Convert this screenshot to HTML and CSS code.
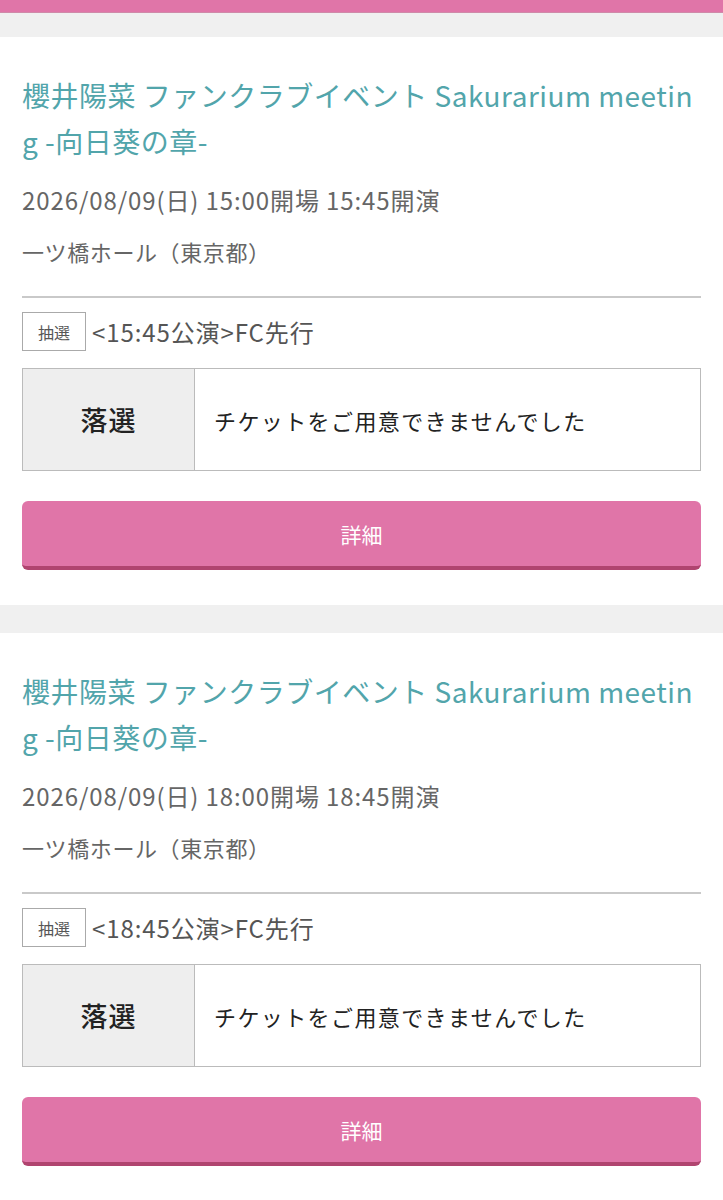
FILE: index.html
```html
<!DOCTYPE html>
<html lang="ja">
<head>
    <meta charset="UTF-8">
    <meta name="viewport" content="width=device-width, initial-scale=1.0">
    <title>申込履歴</title>
    <link rel="stylesheet" href="styles.css">
</head>
<body>
    <div class="topbar"></div>

    <div class="entry-list">
        <div class="entry">
            <h2 class="entry-title">櫻井陽菜 ファンクラブイベント Sakurarium meeting -向日葵の章-</h2>
            <p class="entry-date">2026/08/09(日) 15:00開場 15:45開演</p>
            <p class="entry-venue">一ツ橋ホール（東京都）</p>
            <div class="entry-sale">
                <span class="sale-tag">抽選</span>
                <span class="sale-name">&lt;15:45公演&gt;FC先行</span>
            </div>
            <table class="result">
                <tr>
                    <th>落選</th>
                    <td>チケットをご用意できませんでした</td>
                </tr>
            </table>
            <a class="detail-btn" href="#">詳細</a>
        </div>

        <div class="entry">
            <h2 class="entry-title">櫻井陽菜 ファンクラブイベント Sakurarium meeting -向日葵の章-</h2>
            <p class="entry-date">2026/08/09(日) 18:00開場 18:45開演</p>
            <p class="entry-venue">一ツ橋ホール（東京都）</p>
            <div class="entry-sale">
                <span class="sale-tag">抽選</span>
                <span class="sale-name">&lt;18:45公演&gt;FC先行</span>
            </div>
            <table class="result">
                <tr>
                    <th>落選</th>
                    <td>チケットをご用意できませんでした</td>
                </tr>
            </table>
            <a class="detail-btn" href="#">詳細</a>
        </div>
    </div>
</body>
</html>
```

FILE: styles.css
```css
body {
    margin: 0;
    background-color: #f0f0f0;
    font-family: "Noto Sans CJK JP", "Noto Sans", sans-serif;
    color: #333;
}
.topbar {
    height: 12px;
    background-color: #e075a8;
    border-bottom: 1px solid #cf8aa9;
}
.entry-list {
    display: flex;
    flex-direction: column;
    gap: 28px;
    padding-top: 24px;
}
.entry {
    background: #fff;
    padding: 35px 22px 35px;
}
.entry-title {
    margin: 0;
    font-size: 28px;
    font-weight: normal;
    line-height: 46px;
    letter-spacing: 0.5px;
    color: #52a5ab;
    word-break: break-all;
}
.entry-date,
.entry-venue {
    margin: 18px 0 0;
    font-size: 24px;
    line-height: 36px;
    letter-spacing: 0.9px;
    color: #666;
}
.entry-venue {
    margin-top: 15px;
    font-size: 22px;
    letter-spacing: 0.6px;
}
.entry-sale {
    display: flex;
    align-items: center;
    gap: 6px;
    margin-top: 27px;
    padding-top: 14px;
    border-top: 2px solid #c9c9c9;
}
.sale-tag {
    display: inline-flex;
    align-items: center;
    justify-content: center;
    width: 62px;
    height: 37px;
    border: 1px solid #aaa;
    font-size: 16px;
    color: #555;
}
.sale-name {
    font-size: 24px;
    letter-spacing: 0.9px;
    color: #555;
}
.result {
    width: 100%;
    margin-top: 17px;
    border-collapse: collapse;
}
.result th,
.result td {
    height: 101px;
    border: 1px solid #bbb;
    padding: 0;
}
.result th {
    width: 171px;
    background-color: #eee;
    font-size: 27px;
    font-weight: 500;
    letter-spacing: 1px;
    color: #222;
}
.result td {
    padding-left: 19px;
    font-size: 22px;
    letter-spacing: 1.4px;
    color: #222;
}
.detail-btn {
    display: flex;
    align-items: center;
    justify-content: center;
    height: 65px;
    margin-top: 30px;
    background-color: #e075a8;
    border-bottom: 4px solid #b0446f;
    border-radius: 6px;
    color: #fff;
    font-size: 21px;
    text-decoration: none;
}
```
